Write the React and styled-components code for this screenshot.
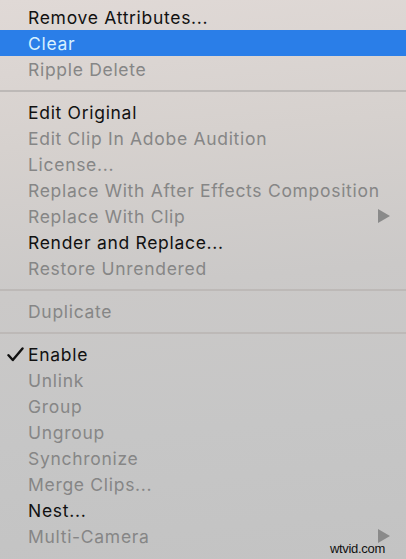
import styled, { createGlobalStyle } from "styled-components";

const GlobalStyle = createGlobalStyle`
  html, body {
    margin: 0;
    padding: 0;
    overflow: hidden;
  }
  body {
    font-family: Inter, "Liberation Sans", Arial, sans-serif;
  }
`;

const menu = [
  { label: "Remove Attributes..." },
  { label: "Clear", selected: true },
  { label: "Ripple Delete", disabled: true },
  { sep: true },
  { label: "Edit Original" },
  { label: "Edit Clip In Adobe Audition", disabled: true },
  { label: "License...", disabled: true },
  { label: "Replace With After Effects Composition", disabled: true },
  { label: "Replace With Clip", disabled: true, submenu: true },
  { label: "Render and Replace..." },
  { label: "Restore Unrendered", disabled: true },
  { sep: true },
  { label: "Duplicate", disabled: true },
  { sep: true },
  { label: "Enable", checked: true },
  { label: "Unlink", disabled: true },
  { label: "Group", disabled: true },
  { label: "Ungroup", disabled: true },
  { label: "Synchronize", disabled: true },
  { label: "Merge Clips...", disabled: true },
  { label: "Nest..." },
  { label: "Multi-Camera", disabled: true, submenu: true },
];

const CheckIcon = () => (
  <svg width="17" height="15" viewBox="0 0 17 15">
    <path d="M1.5 8.2 L5.8 13 L15.5 1.5" fill="none" stroke="#111" strokeWidth="2.4" strokeLinecap="round" strokeLinejoin="round" />
  </svg>
);

export default function App() {
  return (
    <>
      <GlobalStyle />
      <Menu>
        {menu.map((item, i) =>
          item.sep ? (
            <Separator key={i} />
          ) : (
            <Item key={i} $selected={item.selected} $disabled={item.disabled}>
              <Check>{item.checked && <CheckIcon />}</Check>
              <Label>{item.label}</Label>
              {item.submenu && <Arrow />}
            </Item>
          )
        )}
        <Watermark>wtvid.com</Watermark>
      </Menu>
    </>
  );
}

const Menu = styled.div`
  position: relative;
  width: 406px;
  height: 559px;
  box-sizing: border-box;
  padding-top: 4px;
  display: flex;
  flex-direction: column;
  background: linear-gradient(175deg, #e0d9d6 0%, #d6d1ce 25%, #cbc9c8 50%, #c6c6c6 75%, #c3c3c3 100%);
`;

const Item = styled.div`
  display: flex;
  align-items: center;
  height: 26px;
  flex-shrink: 0;
  padding-right: 16px;
  font-size: 17.5px;
  letter-spacing: 0.7px;
  color: ${(p) => (p.$selected ? "#d8f1ff" : p.$disabled ? "#868686" : "#111111")};
  background: ${(p) => (p.$selected ? "#2a7ee8" : "transparent")};
`;

const Check = styled.span`
  width: 28px;
  padding-left: 7px;
  box-sizing: border-box;
  display: flex;
  align-items: center;
`;

const Label = styled.span`
  flex: 1;
  white-space: nowrap;
`;

const Arrow = styled.span`
  width: 0;
  height: 0;
  border-top: 7px solid transparent;
  border-bottom: 7px solid transparent;
  border-left: 12px solid #8a8a8a;
`;

const Separator = styled.div`
  height: 17px;
  flex-shrink: 0;
  display: flex;
  align-items: center;
  &::after {
    content: "";
    flex: 1;
    height: 2px;
    background: #bdb9b7;
  }
`;

const Watermark = styled.div`
  position: absolute;
  right: 21px;
  bottom: 3px;
  font-family: "Liberation Sans", Arial, sans-serif;
  font-size: 13px;
  color: #111;
  letter-spacing: -0.3px;
`;
